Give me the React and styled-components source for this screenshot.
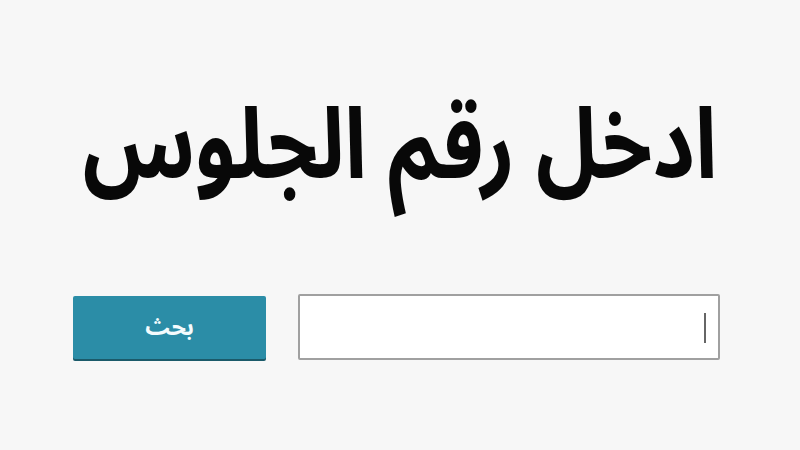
import styled, { createGlobalStyle } from 'styled-components';

const GlobalStyle = createGlobalStyle`
  html, body {
    margin: 0;
    padding: 0;
    background: #f7f7f7;
  }
`;

const Page = styled.div`
  width: 800px;
  height: 450px;
  display: flex;
  flex-direction: column;
  align-items: center;
  box-sizing: border-box;
  padding-top: 72px;
  font-family: 'Noto Sans Arabic', 'DejaVu Sans', sans-serif;
`;

const Title = styled.h1`
  margin: 0;
  font-size: 82px;
  font-weight: 740;
  line-height: 150px;
  color: #080808;
  transform: scaleY(1.2);
`;

const SearchRow = styled.form`
  margin: 72px 7px 0 0;
  display: flex;
  flex-direction: row-reverse;
  align-items: center;
  gap: 32px;
`;

const Field = styled.div`
  position: relative;
  width: 422px;
  height: 66px;
  box-sizing: border-box;
  background: #fff;
  border: 2px solid #a0a0a0;
  border-radius: 2px;
`;

const Input = styled.input`
  width: 100%;
  height: 100%;
  box-sizing: border-box;
  border: none;
  outline: none;
  background: transparent;
  padding: 0 14px;
  font-size: 18px;
  direction: rtl;
`;

// text caret drawn at the start of the rtl field
const Caret = styled.span`
  position: absolute;
  right: 12px;
  top: 17px;
  width: 2px;
  height: 30px;
  background: #666;
`;

const Button = styled.button`
  width: 193px;
  height: 63px;
  border: none;
  border-radius: 2px;
  background: #2b8da7;
  color: #f4fbfd;
  font-family: inherit;
  font-size: 23px;
  font-weight: 700;
  box-shadow: 0 2px 0 #1b5a6a;
`;

const App = () => (
  <>
    <GlobalStyle />
    <Page>
      <Title dir="rtl">ادخل رقم الجلوس</Title>
      <SearchRow onSubmit={(e) => e.preventDefault()}>
        <Field>
          <Input type="text" />
          <Caret />
        </Field>
        <Button type="submit">بحث</Button>
      </SearchRow>
    </Page>
  </>
);

export default App;
